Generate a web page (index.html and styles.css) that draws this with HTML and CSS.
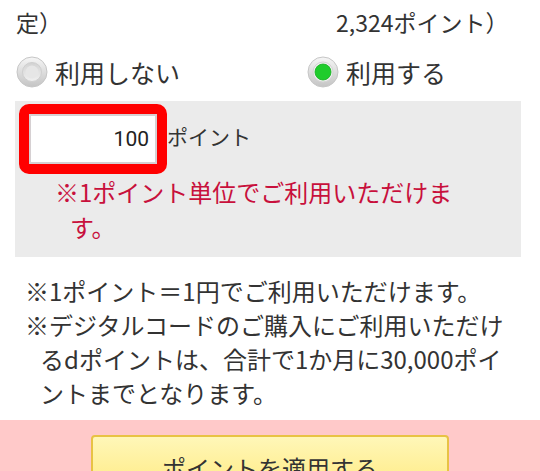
FILE: index.html
```html
<!DOCTYPE html>
<html lang="ja">
<head>
<meta charset="utf-8">
<link rel="stylesheet" href="styles.css">
</head>
<body>
<div class="page">
  <div class="pair toprow">
    <div class="cell">定）</div>
    <div class="cell balance">2,324ポイント）</div>
  </div>
  <div class="pair radios">
    <label class="radio">
      <svg class="radio-icon" width="32" height="32" viewBox="0 0 32 32">
        <defs>
          <linearGradient id="rg1" x1="0" y1="0" x2="0" y2="1">
            <stop offset="0" stop-color="#f6f6f6"/>
            <stop offset="1" stop-color="#c4c4c4"/>
          </linearGradient>
          <linearGradient id="rg2" x1="0" y1="0" x2="0" y2="1">
            <stop offset="0" stop-color="#d2d2d2"/>
            <stop offset="1" stop-color="#f0f0f0"/>
          </linearGradient>
        </defs>
        <circle cx="16" cy="16" r="15" fill="url(#rg1)" stroke="#c6c6c6" stroke-width="1"/>
        <circle cx="16" cy="16" r="9.5" fill="url(#rg2)" stroke="#cfcfcf" stroke-width="1"/>
        <circle cx="16" cy="16" r="6.5" fill="#e6e6e6"/>
      </svg>
      <span>利用しない</span>
    </label>
    <label class="radio">
      <svg class="radio-icon" width="32" height="32" viewBox="0 0 32 32">
        <defs>
          <linearGradient id="rg3" x1="0" y1="0" x2="0" y2="1">
            <stop offset="0" stop-color="#f6f6f6"/>
            <stop offset="1" stop-color="#c4c4c4"/>
          </linearGradient>
        </defs>
        <circle cx="16" cy="16" r="15" fill="url(#rg3)" stroke="#c6c6c6" stroke-width="1"/>
        <circle cx="16" cy="16" r="10" fill="#eeeeee" stroke="#d4d4d4" stroke-width="1"/>
        <circle cx="16" cy="16" r="8" fill="#1fcc2c" stroke="#17b022" stroke-width="0.8"/>
      </svg>
      <span>利用する</span>
    </label>
  </div>
  <div class="points-box">
    <div class="input-row">
      <span class="highlight"><span class="point-input">100</span></span>
      <span class="unit">ポイント</span>
    </div>
    <p class="warn">※1ポイント単位でご利用いただけま<br>す。</p>
  </div>
  <ul class="notes">
    <li>※1ポイント＝1円でご利用いただけます。</li>
    <li>※デジタルコードのご購入にご利用いただけ<br>るdポイントは、合計で1か月に30,000ポイ<br>ントまでとなります。</li>
  </ul>
  <div class="apply-area">
    <button class="apply-btn">ポイントを適用する</button>
  </div>
</div>
</body>
</html>
```
FILE: styles.css
```css
* { box-sizing: border-box; }
html, body {
  margin: 0;
  padding: 0;
  background: #ffffff;
}
body {
  font-family: "Noto Sans CJK JP", "Noto Sans", sans-serif;
  color: #333333;
  overflow: hidden;
}
.page {
  width: 540px;
}
.pair {
  display: grid;
  grid-template-columns: 291px 1fr;
  padding-left: 16px;
}
.toprow {
  font-size: 23px;
  line-height: 34px;
  margin-top: 5px;
  height: 34px;
}
.balance {
  padding-left: 29px;
}
.radios {
  margin-top: 11px;
  margin-bottom: 7px;
  height: 44px;
  font-size: 25px;
}
.radio {
  display: flex;
  align-items: center;
  gap: 7px;
}
.radio-icon {
  display: block;
  flex: none;
}
.points-box {
  margin: 0 19px 0 15px;
  background: #ebebeb;
  padding: 3px 0 13px 4px;
}
.input-row {
  display: flex;
  align-items: center;
}
.highlight {
  display: block;
  border: 10px solid #ff0000;
  border-radius: 10px;
}
.point-input {
  display: block;
  width: 128px;
  height: 50px;
  background: #ffffff;
  border: 2px solid #d6d0d2;
  font-family: Roboto, "Noto Sans", sans-serif;
  font-size: 21px;
  line-height: 46px;
  text-align: right;
  padding-right: 6px;
  color: #222222;
}
.unit {
  font-size: 21px;
  margin-left: 0px;
  margin-top: -6px;
  color: #333333;
}
.warn {
  margin: 0;
  padding-left: 51px;
  text-indent: -15px;
  font-size: 24px;
  line-height: 35px;
  color: #c8103c;
  white-space: nowrap;
}
.notes {
  list-style: none;
  margin: 17px 0 0 0;
  padding: 0 0 0 40px;
  font-size: 24px;
  line-height: 34px;
  color: #333333;
  white-space: nowrap;
}
.notes li {
  text-indent: -15px;
}
.apply-area {
  margin-top: 10px;
  background: #ffc9c9;
  padding-top: 15px;
  height: 80px;
  display: flex;
  justify-content: center;
}
.apply-btn {
  width: 358px;
  height: 64px;
  border: 2px solid #e8c244;
  border-radius: 4px;
  background: linear-gradient(#fff7b8, #ffe97c);
  font-family: "Noto Sans CJK JP", "Noto Sans", sans-serif;
  font-size: 24px;
  color: #333333;
  padding: 0;
}
```
